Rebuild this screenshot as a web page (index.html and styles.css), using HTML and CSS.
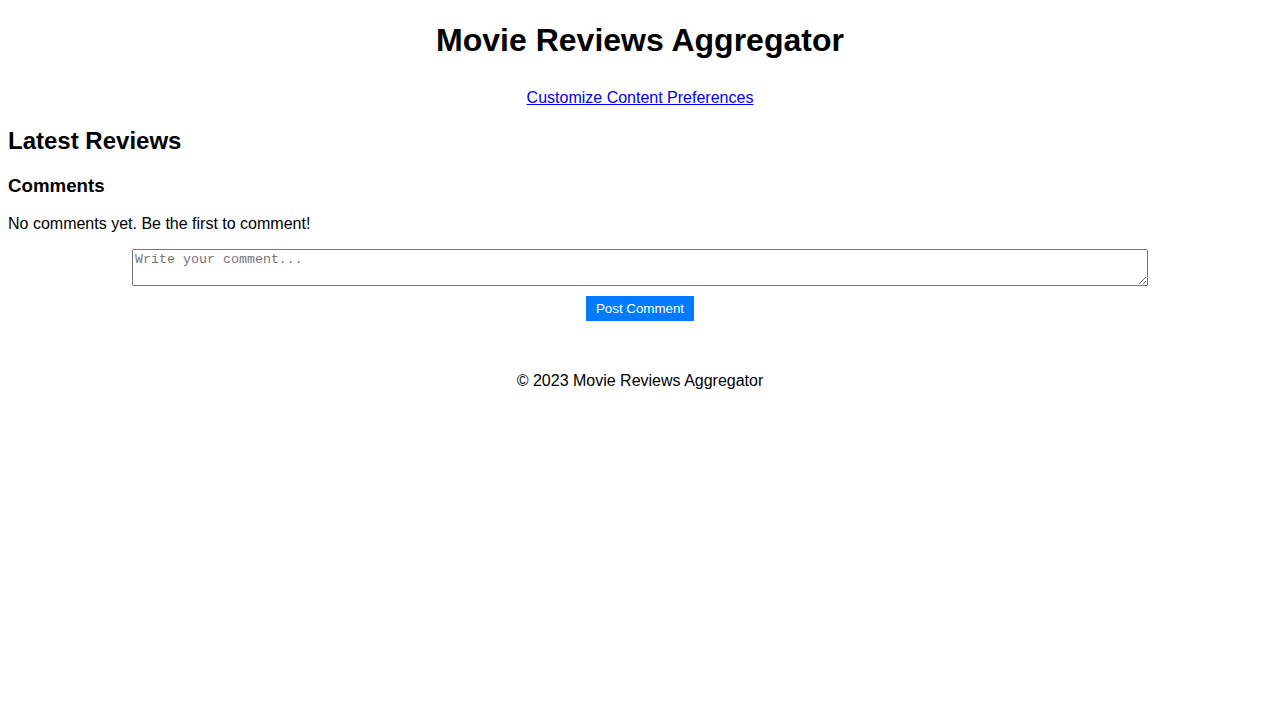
FILE: index.html
```html
<!DOCTYPE html>
<html lang="en">
<head>
<meta charset="utf-8">
<title>Movie Reviews Aggregator</title>
<link rel="stylesheet" href="styles.css">
</head>
<body>
<header class="site-header">
  <h1 class="title">Movie Reviews Aggregator</h1>
  <nav class="nav">
    <a href="#" class="nav-link">Customize Content Preferences</a>
  </nav>
</header>
<main class="main">
  <section class="reviews">
    <h2 class="section-title">Latest Reviews</h2>
    <div class="comments">
      <h3 class="comments-title">Comments</h3>
      <p class="no-comments">No comments yet. Be the first to comment!</p>
      <form class="comment-form">
        <textarea class="comment-input" placeholder="Write your comment..."></textarea>
        <button type="button" class="post-btn">Post Comment</button>
      </form>
    </div>
  </section>
</main>
<footer class="site-footer">
  <p class="copy">&copy; 2023 Movie Reviews Aggregator</p>
</footer>
</body>
</html>
```
FILE: styles.css
```css
body {
  margin: 8px;
  font-family: "Liberation Sans", Arial, sans-serif;
  color: #000;
  background: #fff;
}
.site-header {
  text-align: center;
}
.title {
  font-size: 32px;
  margin: 14.44px 0 0;
}
.nav {
  padding-top: 29.6px;
}
.nav-link {
  color: #0000ee;
}
.section-title {
  font-size: 24px;
  margin: 20px 0;
}
.comments-title {
  font-size: 18.72px;
  margin: 18.72px 0 17.72px;
}
.no-comments {
  margin: 0 0 16px;
}
.comment-form {
  display: flex;
  flex-direction: column;
  align-items: center;
  gap: 10px;
}
.comment-input {
  width: calc(80% + 5px);
  height: 37px;
  box-sizing: border-box;
  font-family: "Liberation Mono", monospace;
  font-size: 13.33px;
}
.post-btn {
  background: #007bff;
  color: #fff;
  border: none;
  padding: 5px 10px;
  font-family: "Liberation Sans", Arial, sans-serif;
  font-size: 13.33px;
}
.site-footer {
  text-align: center;
  margin-top: 51px;
}
.copy {
  margin: 16px 0;
}
```
